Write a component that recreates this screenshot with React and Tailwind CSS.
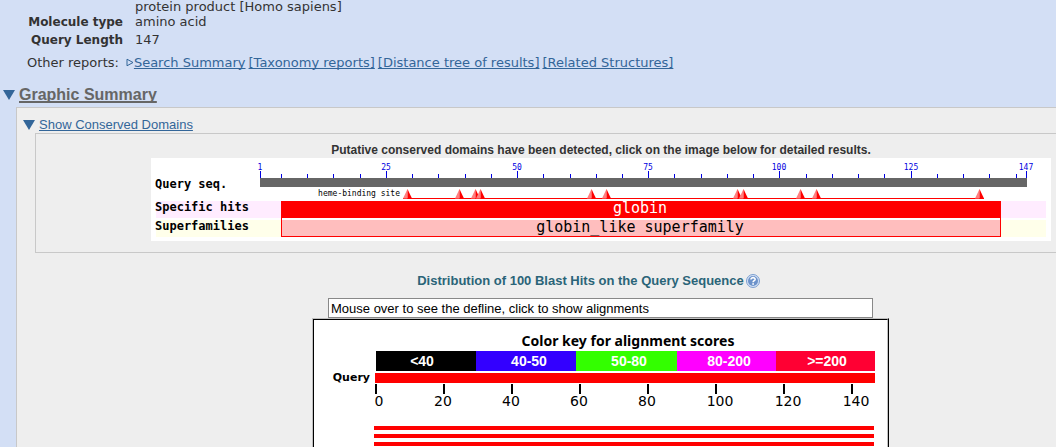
const reportLinks = ['Search Summary', '[Taxonomy reports]', '[Distance tree of results]', '[Related Structures]'];

const QUERY_LENGTH = 147;
const bindingSites = [29, 39, 42, 43, 64, 67, 92, 93, 104, 107, 138];
const minorTicks = Array.from({ length: 29 }, (_, i) => (i + 1) * 5);
const majorTicks = [1, 25, 50, 75, 100, 125, 147];

// residue number -> x inside the conserved domain chart
const seqX = (residue) => Math.round(109 + ((residue - 1) * 766) / (QUERY_LENGTH - 1));

const scoreKey = [
  { label: '<40', x: 62, width: 100, text: 108, color: '#000000' },
  { label: '40-50', x: 162, width: 100, text: 215, color: '#3300ff' },
  { label: '50-80', x: 262, width: 101, text: 315, color: '#33ff00' },
  { label: '80-200', x: 363, width: 99, text: 415, color: '#ff00ff' },
  { label: '>=200', x: 462, width: 99, text: 513, color: '#ff0033' },
];

const axis = [
  { label: 0, tick: 61, text: 65 },
  { label: 20, tick: 129, text: 129 },
  { label: 40, tick: 197, text: 197 },
  { label: 60, tick: 265, text: 265 },
  { label: 80, tick: 333, text: 333 },
  { label: 100, tick: 401, text: 406 },
  { label: 120, tick: 469, text: 474 },
  { label: 140, tick: 537, text: 542 },
];

const hits = [106, 114, 122];

const Toggle = () => (
  <svg width="12" height="10" viewBox="0 0 12 10" fill="#336699" className="shrink-0" aria-hidden="true">
    <path d="M0 0h12L6 10z" />
  </svg>
);

const HelpIcon = () => (
  <svg width="14" height="14" viewBox="0 0 14 14" aria-hidden="true">
    <circle cx="7" cy="7" r="6.5" fill="#d5e2f5" stroke="#7c9fd0" />
    <circle cx="7" cy="7" r="5" fill="#6c92ca" />
    <path d="M5 5.4C5 3 9.2 3.1 9.1 5.4 9 6.7 7.1 6.6 7.1 8.3" fill="none" stroke="#fff" strokeWidth="1.6" />
    <rect x="6.3" y="9.2" width="1.6" height="1.6" fill="#fff" />
  </svg>
);

const ConservedDomains = () => (
  <svg width="900" height="83" viewBox="0 0 900 83" className="shrink-0 bg-white font-['DejaVu_Sans_Mono',monospace]">
    <g shapeRendering="crispEdges">
      <rect x="5" y="43" width="890" height="17" fill="#ffecff" />
      <rect x="5" y="62" width="890" height="17" fill="#ffffea" />
      {minorTicks.map((n) => (
        <rect key={n} x={seqX(n)} y="16" width="1" height="4" fill="#0000e0" />
      ))}
      {majorTicks.map((n) => (
        <rect key={n} x={seqX(n)} y="13" width="1" height="7" fill="#0000e0" />
      ))}
      <rect x="109" y="20" width="767" height="9" fill="#666666" />
      <rect x="252" y="40" width="581" height="1" fill="#ff0000" />
      <rect x="130" y="59" width="720" height="20" fill="#ff0000" />
      <rect x="131" y="60" width="718" height="2" fill="#ffffff" />
      <rect x="131" y="62" width="718" height="16" fill="#ffbebe" />
      <rect x="130" y="43" width="720" height="17" fill="#ff0000" />
    </g>
    {bindingSites.map((n) => (
      <g key={n} transform={`translate(${seqX(n)} 31)`}>
        <path d="M0.5 0L-4 9.5H0.5z" fill="#ff8080" />
        <path d="M0.5 0L5 9.5H0.5z" fill="#ff0000" />
      </g>
    ))}
    <g fill="#0000e0" fontSize="8" textAnchor="middle">
      {majorTicks.map((n) => (
        <text key={n} x={seqX(n)} y="12">{n}</text>
      ))}
    </g>
    <g fill="#000000" fontSize="12" fontWeight="bold">
      <text x="4" y="30">Query seq.</text>
      <text x="4" y="53">Specific hits</text>
      <text x="4" y="72">Superfamilies</text>
    </g>
    <text x="249" y="38" fill="#000000" fontSize="8" textAnchor="end">heme-binding site</text>
    <g fontSize="15" textAnchor="middle">
      <text x="489" y="55" fill="#ffffff">globin</text>
      <text x="489" y="74" fill="#000000">globin_like superfamily</text>
    </g>
  </svg>
);

const BlastHits = () => (
  <svg width="573" height="127" viewBox="0 0 573 127" className="font-['DejaVu_Sans',sans-serif]">
    <text x="314" y="26" fontSize="14" fontWeight="bold" textAnchor="middle" className="font-['Noto_Sans',sans-serif]">
      Color key for alignment scores
    </text>
    {scoreKey.map((key) => (
      <g key={key.label}>
        <rect x={key.x} y="31" width={key.width} height="20" fill={key.color} />
        <text x={key.text} y="46" fill="#fff" fontSize="14" fontWeight="bold" textAnchor="middle" className="font-['Liberation_Sans',sans-serif]">
          {key.label}
        </text>
      </g>
    ))}
    <text x="56" y="61" fontSize="11" fontWeight="bold" textAnchor="end">Query</text>
    <rect x="61" y="53" width="500" height="10" fill="#ff0000" />
    {axis.map((mark) => (
      <g key={mark.label}>
        <rect x={mark.tick} y="64" width="2" height="10" />
        <text x={mark.text} y="86" fontSize="14" textAnchor="middle">{mark.label}</text>
      </g>
    ))}
    {hits.map((y) => (
      <rect key={y} x="60" y={y} width="500" height="4" fill="#ff0000" />
    ))}
  </svg>
);

const App = () => {
  return (
    <div className="flex min-h-screen flex-col overflow-hidden bg-[#d3dff5] font-['DejaVu_Sans',sans-serif] text-[13px] leading-[17px] text-[#333333]">
      <dl className="grid grid-cols-[123px_1fr] items-baseline gap-x-3">
        <dd className="col-start-2 leading-[13px]">protein product [Homo sapiens]</dd>
        <dt className="text-right text-[12px] font-bold">Molecule type</dt>
        <dd>amino acid</dd>
        <dt className="text-right text-[12px] font-bold">Query Length</dt>
        <dd>147</dd>
      </dl>

      <div className="mt-[5px] flex items-center pl-[27px] whitespace-nowrap">
        <span>Other reports:</span>
        <svg width="8" height="9" viewBox="0 0 8 9" className="ml-[7px]" aria-hidden="true">
          <path d="M1 1.2L7 4.5 1 7.8z" fill="#d3dff5" stroke="#336699" />
        </svg>
        <div className="flex gap-[3px]">
          {reportLinks.map((link) => (
            <a key={link} href="#" className="text-[#336699] underline [text-decoration-skip-ink:none]">{link}</a>
          ))}
        </div>
      </div>

      <h2 className="mt-3 flex items-center gap-1 pl-[3px] font-['Liberation_Sans',sans-serif] text-base leading-6 font-bold">
        <Toggle />
        <a href="#" className="text-[#666666] underline decoration-2 [text-decoration-skip-ink:none]">Graphic Summary</a>
      </h2>

      <main className="ml-4 flex flex-1 flex-col border-t border-l border-[#c8c8c8] bg-[#eeeeee] pl-[18px] font-['Liberation_Sans',sans-serif]">
        <div className="-ml-3 flex items-center gap-1 pt-2">
          <Toggle />
          <a href="#" className="text-[#336699] underline [text-decoration-skip-ink:none]">Show Conserved Domains</a>
        </div>

        <section className="flex flex-col items-center border-y border-l border-[#c8c8c8] pt-2 pb-[11px] pl-[110px]">
          <p className="text-[12px] leading-4 font-bold">
            Putative conserved domains have been detected, click on the image below for detailed results.
          </p>
          <ConservedDomains />
        </section>

        <section className="flex flex-1 flex-col items-center pt-[18px] pl-[110px]">
          <h3 id="hits-title" className="flex items-center gap-0.5 pr-6 text-[13px] leading-5 font-bold text-[#2a6478]">
            Distribution of 100 Blast Hits on the Query Sequence
            <HelpIcon />
          </h3>
          <input
            type="text"
            readOnly
            aria-labelledby="hits-title"
            defaultValue="Mouse over to see the defline, click to show alignments"
            className="mt-[7px] h-5 w-[545px] border border-[#888888] bg-white px-0.5 text-[13px] text-black"
          />
          <div className="flex flex-1 border-t border-r border-l border-t-[#c0c0c0] border-r-black border-l-[#c0c0c0]">
            <div className="border-t border-r border-l border-t-black border-r-[#c0c0c0] border-l-black bg-white">
              <BlastHits />
            </div>
          </div>
        </section>
      </main>
    </div>
  );
};

export default App;
